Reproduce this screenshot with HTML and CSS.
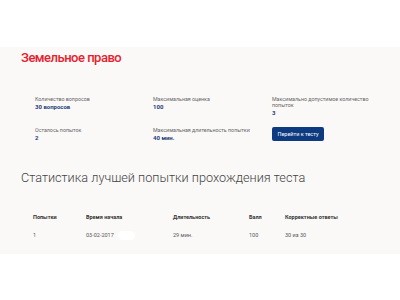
FILE: index.html
```html
<!DOCTYPE html>
<html lang="ru">
<head>
<meta charset="utf-8">
<link rel="stylesheet" href="styles.css">
</head>
<body>
<header class="top"></header>
<main class="band">
  <h1 class="title">Земельное право</h1>
  <section class="info">
    <div class="cell">
      <div class="label">Количество вопросов</div>
      <div class="value">30 вопросов</div>
    </div>
    <div class="cell">
      <div class="label">Максимальная оценка</div>
      <div class="value">100</div>
    </div>
    <div class="cell">
      <div class="label">Максимально допустимое количество<br>попыток</div>
      <div class="value">3</div>
    </div>
    <div class="cell">
      <div class="label">Осталось попыток</div>
      <div class="value">2</div>
    </div>
    <div class="cell">
      <div class="label">Максимальная длительность попытки</div>
      <div class="value">40 мин.</div>
    </div>
    <div class="cell">
      <button class="btn">Перейти к тесту</button>
    </div>
  </section>
  <h2 class="stats">Статистика лучшей попытки прохождения теста</h2>
  <div class="table">
    <div class="th">Попытки</div>
    <div class="th">Время начала</div>
    <div class="th">Длительность</div>
    <div class="th">Балл</div>
    <div class="th">Корректные ответы</div>
    <div class="td">1</div>
    <div class="td">03-02-2017<span class="blur"></span></div>
    <div class="td">29 мин.</div>
    <div class="td">100</div>
    <div class="td">30 из 30</div>
  </div>
</main>
</body>
</html>
```
FILE: styles.css
```css
* { box-sizing: border-box; }
html, body { margin: 0; padding: 0; background: #ffffff; }
body { font-family: Roboto, "Noto Sans", sans-serif; color: #333; }
.top { height: 47px; background: #ffffff; }
.band {
  background: #faf9f8;
  height: 207px;
  padding: 2px 0 0 0;
}
.title {
  margin: 0 0 0 21px;
  font-size: 13px;
  line-height: 18px;
  font-weight: 500;
  letter-spacing: -0.5px;
  color: #e8202e;
}
.info {
  display: grid;
  grid-template-columns: 118px 119px 1fr;
  row-gap: 9px;
  margin: 29px 0 0 35px;
}
.label {
  font-size: 5.3px;
  line-height: 6px;
  color: #666;
}
.value {
  font-size: 6px;
  line-height: 10px;
  font-weight: 700;
  color: #1e3c78;
}
.btn {
  display: block;
  width: 52px;
  height: 14px;
  padding: 0;
  border: none;
  border-radius: 2px;
  background: #0e3a80;
  color: #fff;
  font-family: Roboto, sans-serif;
  font-size: 5.5px;
  line-height: 14px;
  text-align: center;
}
.stats {
  margin: 27px 0 0 21px;
  font-size: 12.7px;
  line-height: 16px;
  font-weight: 300;
  color: #444;
}
.table {
  display: grid;
  grid-template-columns: 53px 87px 76px 36px 1fr;
  grid-auto-rows: 10px;
  row-gap: 8px;
  margin: 26px 0 0 33px;
}
.th, .td {
  font-size: 5.5px;
  line-height: 10px;
  color: #555;
}
.th { font-weight: 700; color: #333; }
.blur {
  display: inline-block;
  width: 17px;
  height: 9px;
  margin-left: 4px;
  vertical-align: middle;
  border-radius: 5px;
  background: #ffffff;
}
```
